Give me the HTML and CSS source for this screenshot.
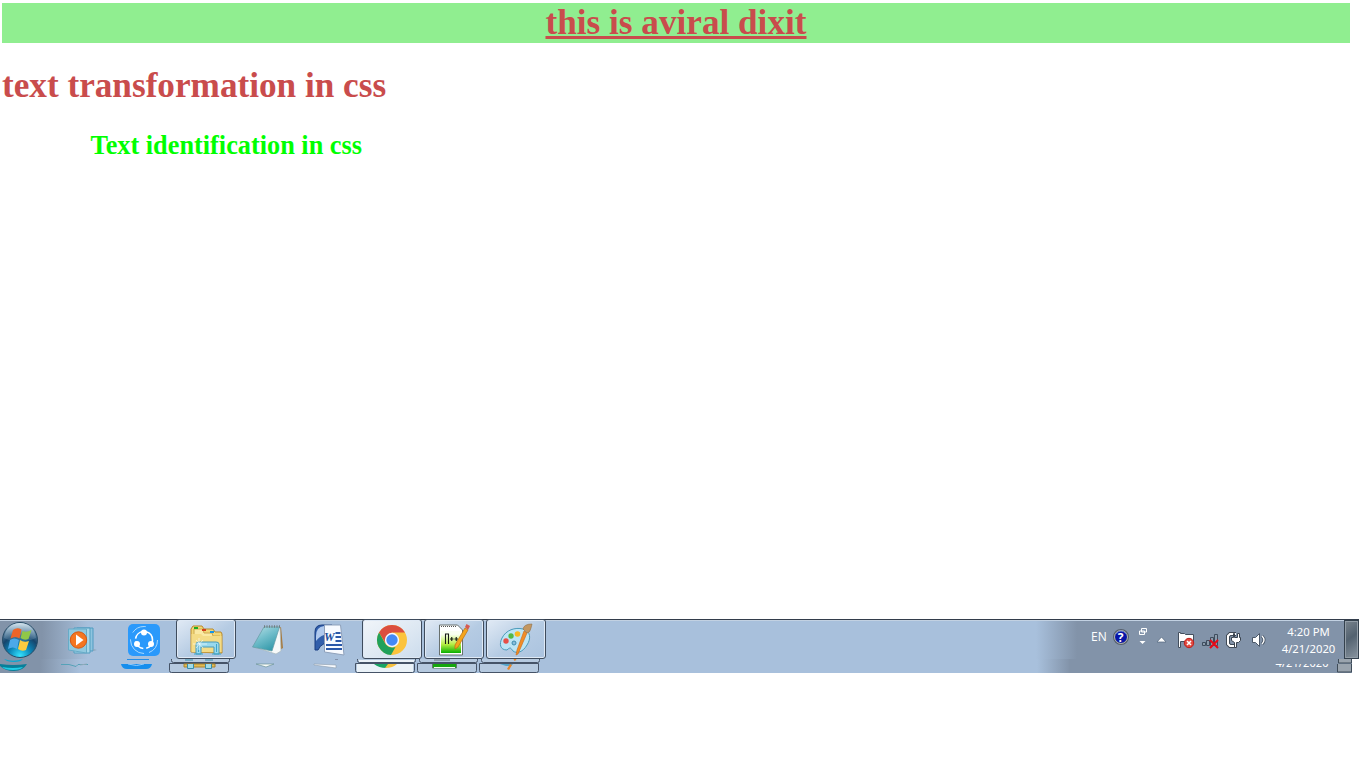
FILE: index.html
```html
<!DOCTYPE html>
<html lang="en">
<head>
<meta charset="utf-8">
<title>text</title>
<link rel="stylesheet" href="styles.css">
</head>
<body>
<main class="page">
  <h1 class="banner">this is aviral dixit</h1>
  <h1 class="heading">text transformation in css</h1>
  <h2 class="subheading">Text identification in css</h2>
</main>
<footer class="desktop">
  <div class="taskbar">
    <div class="start">
      <svg width="40" height="40" viewBox="0 0 40 40">
        <defs>
          <radialGradient id="orb" cx=".5" cy=".95" r=".9"><stop offset="0" stop-color="#35e4ff"/><stop offset=".35" stop-color="#0b86b8"/><stop offset=".65" stop-color="#16456c"/><stop offset="1" stop-color="#7397b4"/></radialGradient>
          <linearGradient id="shine" x2="0" y2="1"><stop offset="0" stop-color="#d3e3ed"/><stop offset="1" stop-color="#608aa8" stop-opacity=".25"/></linearGradient>
        </defs>
        <circle cx="20" cy="20" r="17.5" fill="url(#orb)" stroke="#274c66"/>
        <path d="M4 18C5 8 12 3 20 3s15 5 16 15c-8 4-23 5-32 0z" fill="url(#shine)"/>
        <path d="M13 10q4-3 8.500-.5l-2 9q-4-3-9 0z" fill="#ee6428"/>
        <path d="M22.500 11q4 2 9-1l-3 9q-4 2-8-1z" fill="#90c748"/>
        <path d="M10 20q4-3 9 0l-2 9q-4-3-9 0z" fill="#4ba9e8"/>
        <path d="M20 20q4 3 9 1l-3 9q-4 2-8-1z" fill="#fccc40"/>
      </svg>
    </div>
    <div class="task">
      <svg width="32" height="32" viewBox="0 0 32 32">
        <path d="M11 4h16v23H11z" fill="#8ec4df" stroke="#4e9bc0"/><path d="M8 4h16v25H8z" fill="#a9d7e9" stroke="#509dc0"/><path d="M2.500 5h18v24l-18-3z" fill="#91c9df" stroke="#67abc7"/><path d="M27 25l4 1-4 1z" fill="#8aa5b9"/>
        <circle cx="12.500" cy="16" r="8.200" fill="#f47621" stroke="#d65812"/><path d="M10 10.500l7.500 5.500-7.500 5.500z" fill="#fff"/>
      </svg>
    </div>
    <div class="task">
      <svg width="32" height="32" viewBox="0 0 32 32">
        <rect width="32" height="32" rx="5" fill="#2a99fb"/><circle cx="16" cy="16" r="13.500" fill="none" stroke="#a8d9ff" stroke-dasharray="16 5 22 7 15 20"/><circle cx="16" cy="16" r="8.500" fill="none" stroke="#fff" stroke-width="1.600" stroke-dasharray="11 3"/><circle cx="16" cy="8.500" r="3" fill="#fff"/><circle cx="9" cy="20" r="3" fill="#fff"/><circle cx="23" cy="20" r="3" fill="#fff"/>
      </svg>
    </div>
    <div class="task open">
      <svg width="34" height="32" viewBox="0 0 34 32">
        <path d="M2 28V5l2-3h9l2 3h9l2 3h6l1 2v19z" fill="#f2d777" stroke="#b7892e"/><path d="M5 11V5h9l1 4h8l1 3h7v16H5z" fill="#fae9a4" stroke="#cda950"/><path d="M2.500 10H12l2 2h18.500v16h-30z" fill="#f4dc87"/>
        <path d="M5 3h4v2H5z" fill="#1aac23"/><path d="M13 5h4v2h-4z" fill="#d63e1b"/><path d="M21 7h4v2h-4z" fill="#1594e8"/>
        <path d="M7 30V20q0-2 3-2h17q3 0 3 2v10h-5v-7H12v7z" fill="#98d9ee" stroke="#489ab9"/><path d="M5 30h9M23 30h9M9.500 20v8M27.500 20v8" stroke="#3da6c9"/><path d="M4 20h14M10 14v12M7 16l7 8M14 16l-7 8" stroke="#fff" stroke-width=".6"/>
      </svg>
    </div>
    <div class="task">
      <svg width="32" height="32" viewBox="0 0 32 32">
        <defs><linearGradient id="notepad" x2=".6" y2="1"><stop offset="0" stop-color="#b9e0e6"/><stop offset=".5" stop-color="#72becb"/><stop offset="1" stop-color="#369bab"/></linearGradient></defs>
        <path d="M26 3h3l2 21-5 3z" fill="#a6793e"/><path d="M12 3h16l1 24-5 3L2 23z" fill="#f7faf9" stroke="#a7b8bd" stroke-width=".7"/><path d="M12 3h15.500L20 27 .5 23z" fill="url(#notepad)" stroke="#629aa5" stroke-width=".7"/><path d="M12 2.500h17" stroke="#727d80" stroke-width="2.500" stroke-dasharray="1 1.500"/>
      </svg>
    </div>
    <div class="task">
      <svg width="32" height="32" viewBox="0 0 32 32">
        <path d="M1 26V8q0-7 7-7h10v19q-10-3-14 6z" fill="#315eab" stroke="#193d81"/><path d="M2 12q0-9 8-10v9q-4 1-8 6z" fill="#b0c9ed"/><path d="M10.500 1h16l3.500 30-19.500-3z" fill="#f7faff" stroke="#8fa1bb"/><path d="M21.500 9h5M21.500 13h5.500M21.500 17h6M12 21h16M12 25h16" stroke="#2957a8" stroke-width="2"/><text x="10" y="17" class="word-letter">W</text>
      </svg>
    </div>
    <div class="task open active">
      <svg width="32" height="32" viewBox="0 0 32 32">
        <circle cx="16" cy="16" r="15" fill="#fbc33d"/><path d="M3 8.500A15 15 0 0 1 29 8.500H16L10 20z" fill="#db4e3f"/><path d="M3 8.500L9.500 20q4 5 10 3L15 31A15 15 0 0 1 3 8.500z" fill="#20a15c"/><circle cx="16" cy="16" r="7.200" fill="#f5f8ff"/><circle cx="16" cy="16" r="5.700" fill="#4489f5"/>
      </svg>
    </div>
    <div class="task open">
      <svg width="32" height="32" viewBox="0 0 32 32">
        <defs><linearGradient id="lime" x2="0" y2="1"><stop offset=".15" stop-color="#fafff2"/><stop offset=".6" stop-color="#b8ee45"/><stop offset="1" stop-color="#08af00"/></linearGradient></defs>
        <path d="M1.500 1h18l5 5v25h-23z" fill="#fff" stroke="#68706e"/><path d="M3 7h20v22H3z" fill="url(#lime)"/><path d="M3 2.500h16" stroke="#545454" stroke-dasharray="1 1"/><path d="M7.500 20V10h3v10M12 15h3.500M13.750 13v4M16.500 15h3.500M18.250 13v4" fill="none" stroke="#171b16" stroke-width="1.100"/><path d="M27 4l3 2-10 17-3 2v-4z" fill="#f4a51c" stroke="#ba6f13" stroke-width=".7"/><path d="M27 3l1.500-3L32 2l-2 4z" fill="#d65b52"/>
      </svg>
    </div>
    <div class="task open">
      <svg width="34" height="34" viewBox="0 0 34 34">
        <path d="M8 27C1 27 0 21 3 15 7 7 16 4 24 6c8 2 8 10 4 16-4 7-10 9-14 6-2-2-2-5-6-1z" fill="#bce5f5" stroke="#4b9bbb"/><circle cx="7" cy="18" r="2.700" fill="#e65047"/><circle cx="12" cy="13" r="2.700" fill="#54b844"/><circle cx="18.500" cy="11" r="2.800" fill="#f9b81f"/><circle cx="15" cy="20" r="2" fill="#89bedb" stroke="#3c8cb0"/><path d="M25 8l3 2-9 21-2 1 1-5z" fill="#f28d27" stroke="#c76813" stroke-width=".6"/><path d="M24 6q1-5 9-5l-1 4q-1 5-4 5z" fill="#c49761" stroke="#8c704b" stroke-width=".6"/>
      </svg>
    </div>
    <div class="tray">
      <span class="language">EN</span>
      <svg class="tray-icons" width="180" height="39" viewBox="1089 620 180 39">
        <circle cx="1121" cy="637" r="7" fill="#0714a8" stroke="#56606d" stroke-width="2"/><circle cx="1121" cy="637" r="6.500" fill="none" stroke="#d5d5cd" stroke-width=".7"/><path d="M1115.500 634q5.500-6 11 0" fill="none" stroke="#647bd2"/><text x="1117.800" y="641.500" class="help">?</text>
        <path d="M1141.500 628.500h5v3.500h-5zM1139.500 631h5v3.500h-5z" fill="#8396ad" stroke="#fff"/><path d="M1139.500 641h6l-3 3z" fill="#fff"/>
        <path d="M1157 642l4.500-5 4.500 5z" fill="#fff" stroke="#52667d" stroke-width=".7"/>
        <path d="M1178.500 632.500h2v1h4l1 1h8v8h-8l-1-1h-4v6h-2z" fill="#fff" stroke="#434e5d"/><circle cx="1189" cy="643" r="4.700" fill="#e3483e" stroke="#bb201d"/><path d="M1187 641l4 4m0-4l-4 4" stroke="#fff" stroke-width="1.600"/>
        <path d="M1202.500 642.500h3v3h-3zM1206.500 640.500h3v5h-3zM1210.500 637.500h3v8h-3zM1214.500 634.500h3v11h-3z" fill="#8c9bac" stroke="#3e4d5e"/><path d="M1210 640l8 8m0-8l-8 8" stroke="#e70916" stroke-width="2"/>
        <path d="M1236 634h-6l-2 2v8l2 2h5" fill="none" stroke="#3f4955" stroke-width="4"/><path d="M1236 634h-6l-2 2v8l2 2h5" fill="none" stroke="#fff" stroke-width="2"/><path d="M1233.500 633.500h1v4h3v-4h2v4h1v3l-2 2h-2v5h-2v-5l-3-2v-3h2z" fill="#fff" stroke="#39434f"/>
        <path d="M1252.500 637.500h3l4-4v13l-4-4h-3z" fill="#fff" stroke="#4b5868"/><path d="M1262 636q4 4 0 8" fill="none" stroke="#4b5868" stroke-width="3"/><path d="M1262 636q4 4 0 8" fill="none" stroke="#fff" stroke-width="1.300"/>
      </svg>
      <div class="clock"><span>4:20 PM</span><span>4/21/2020</span></div>
      <div class="show-desktop"></div>
    </div>
  </div>
  <div class="taskbar-echo">
    <svg width="1366" height="14" viewBox="0 659 1366 14">
      <defs><linearGradient id="tail"><stop offset="0" stop-color="#8293a9"/><stop offset=".5" stop-color="#8293a9"/><stop offset="1" stop-color="#a8c0dc"/></linearGradient><linearGradient id="trayTail"><stop offset="0" stop-color="#a8c0dc"/><stop offset="1" stop-color="#8293a9"/></linearGradient></defs>
      <path d="M0 659h1352v14H0z" fill="#a8c0dc"/><path d="M0 659h80v14H0z" fill="url(#tail)"/><path d="M1037 659h33v14h-33z" fill="url(#trayTail)"/><path d="M1069 659h283v14h-283z" fill="#8293a9"/>
      <path d="M4 659q9 3.500 19 0-2 3-9 3t-10-3z" fill="#0aa8d0"/><path d="M0 664q13 2 27 0-4 7-13 7T0 666z" fill="#087f99"/><path d="M2 667q11 2 21 0-2 3-10 3T2 667z" fill="#20cfe8"/>
      <path d="M61 664.500h8l7 2 2-2h10" fill="none" stroke="#55a2b8"/><path d="M80 665l7-1" stroke="#91a9b9"/>
      <path d="M127 659.500h22" stroke="#238de8"/><path d="M121 664h31q-1 5-6 5h-19q-5 0-6-5z" fill="#168eed"/><path d="M128 664q9 3 16 0" fill="none" stroke="#91ccff"/>
      <g class="echo-buttons">
        <path d="M171.500 658v2.500q0 2 2 2h54q2 0 2-2V658M169.500 663.500v7q0 2 2 2h55q2 0 2-2v-7z"/>
        <path d="M357.500 658v2.500q0 2 2 2h54q2 0 2-2V658M355.500 663.500v7q0 2 2 2h55q2 0 2-2v-7z"/>
        <path d="M419.500 658v2.500q0 2 2 2h54q2 0 2-2V658M417.500 663.500v7q0 2 2 2h55q2 0 2-2v-7z"/>
        <path d="M481.500 658v2.500q0 2 2 2h54q2 0 2-2V658M479.500 663.500v7q0 2 2 2h55q2 0 2-2v-7z"/>
      </g>
      <path d="M184 664h31v3h-31z" fill="#e2bc54" stroke="#a9842f"/><path d="M187.500 664v4.500h6V664M205.500 664v4.500h6V664M185 660h8m12 0h8" fill="#a1dbe9" stroke="#368eac"/>
      <path d="M256 664h18l-8 3z" fill="#f8fbf8" stroke="#6b939a" stroke-width=".7"/><path d="M314 664l22 1v3l-22-3z" fill="#f8fbff" stroke="#8c9aaa" stroke-width=".6"/><path d="M335 659.500h3" stroke="#8291ac"/>
      <path d="M359 660h55v2h-55zM357 664h56v8h-56z" fill="#eaf2f8"/><path d="M374 664h15l-3 4q-7 0-12-4z" fill="#19a463"/><path d="M388 664h9q-4 4-12 4z" fill="#f6c13f"/>
      <path d="M434 660h16" stroke="#697579"/><path d="M432.500 664v4h24v-4" fill="#15a70e" stroke="#60776a"/><path d="M434 667.500h21" stroke="#f4fff2"/>
      <path d="M500 664h13l-2 2h-5z" fill="#55a5c9"/><path d="M510 664l2 1-3 5-2-1z" fill="#e88529"/><path d="M514 660l2-1" stroke="#e88529" stroke-width="2"/>
      <path d="M1337.500 664v8h14v-8M1338.500 659v4h13v-4" fill="#9aa4ae" stroke="#3f4c59"/>
      <text x="1275.500" y="667" textLength="53" class="echo-date">4/21/2020</text><path d="M1273 659h60v5h-60z" fill="#8293a9"/>
    </svg>
  </div>
</footer>
</body>
</html>
```
FILE: styles.css
```css
body { margin: 0; background: #fff; overflow: hidden; }
.page { height: 619px; padding: 3px 16px 0 2px; box-sizing: border-box; font-family: "Liberation Serif", "Times New Roman", serif; }
.banner, .heading, .subheading { margin: 0; color: #c94c4c; font-size: 35.2px; line-height: 40px; }
.banner { background: #90ee90; text-align: center; text-decoration: underline; }
.heading { margin-top: 23px; }
.subheading { margin-top: 25px; padding-left: 88.5px; color: #0f0; font-size: 26.3px; line-height: 30px; font-variant-ligatures: none; }

.desktop { font-family: "Noto Sans", "Open Sans", sans-serif; }
.taskbar {
  display: flex; width: 1359px; height: 40px; box-sizing: border-box;
  border-top: 1px solid #333d4b; box-shadow: inset 0 1px #c2d1e2;
  background: linear-gradient(90deg, #8293a9 0, #8293a9 42px, #a8c0dc 88px, #a8c0dc 1036px, #8293a9 1077px);
}
.start { width: 51px; flex: none; }
.start svg { display: block; }
.task { width: 62px; height: 39px; flex: none; display: flex; align-items: center; justify-content: center; position: relative; }
.task svg { position: relative; z-index: 1; }
.open::before {
  content: ""; position: absolute; top: -1px; left: 1px; width: 58px; height: 38px;
  border: 1px solid #3f4c5d; border-radius: 3px;
  background: linear-gradient(145deg, #e1eaf5, #b5cbe3 55%, #abc3df); box-shadow: inset 0 0 0 1px #dfe9f5;
}
.active::before { background: linear-gradient(145deg, #f1f5f9, #dce7f2 60%, #ccdced); }
.word-letter { font: bold italic 12px "Liberation Serif"; fill: #214c9c; }
.tray { display: flex; align-items: flex-start; margin-left: auto; color: #fff; }
.language { font: 12px/34px "Open Sans"; width: 16px; white-space: nowrap; }
.tray-icons { margin-left: -18px; }
.help { font: bold 12px "Open Sans"; fill: #fff; }
.clock { display: flex; flex-direction: column; align-items: center; width: 75px; padding: 3px 0 0 4px; font-size: 11.3px; line-height: 17px; box-sizing: border-box; white-space: nowrap; }
.show-desktop { width: 13px; height: 37px; border: 1px solid #34414d; background: linear-gradient(145deg, #78838d, #536270 45%, #8995a0); box-shadow: inset 0 0 0 1px #929da7; }
.taskbar-echo, .taskbar-echo svg { height: 14px; display: block; }
.echo-buttons { fill: #b5c9df; stroke: #455367; }
.echo-date { font: 11px "Noto Sans"; fill: #fff; }
```
